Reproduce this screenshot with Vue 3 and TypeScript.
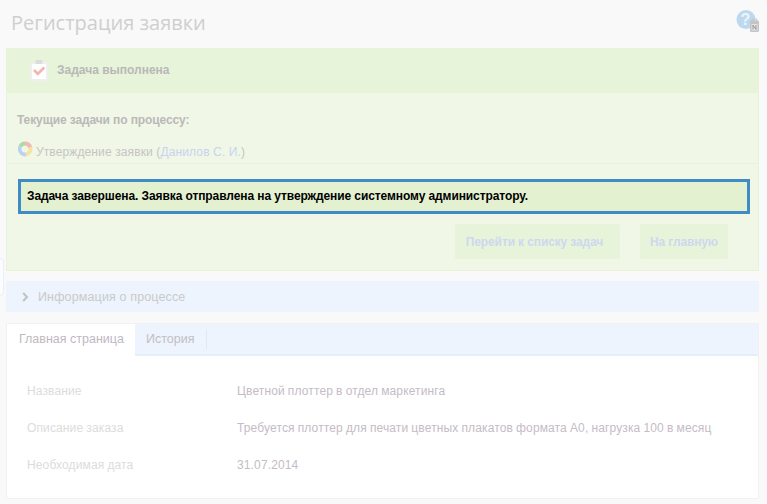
<script setup lang="ts">
const rows = [
  { label: 'Название', value: 'Цветной плоттер в отдел маркетинга' },
  { label: 'Описание заказа', value: 'Требуется плоттер для печати цветных плакатов формата А0, нагрузка 100 в месяц' },
  { label: 'Необходимая дата', value: '31.07.2014' },
]
</script>

<template>
  <div class="page">
    <span class="handle"></span>
    <header class="head">
      <h1>Регистрация заявки</h1>
      <span class="help">
        <svg width="24" height="24" viewBox="0 0 24 24">
          <circle cx="10" cy="9.5" r="9.5" fill="#bcd9ef" />
          <text x="9.5" y="15" text-anchor="middle" class="q">?</text>
          <rect x="14" y="10.5" width="9" height="11.5" rx="1.5" fill="#c4c4c4" />
          <rect x="16" y="9" width="5" height="3" rx="1" fill="none" stroke="#c4c4c4" />
          <rect x="15.5" y="14" width="6" height="6.5" fill="#e4e4e4" />
          <path d="M17 19.5v-4.5l3 4.500v-4.500" fill="none" stroke="#9a9a9a" />
        </svg>
      </span>
    </header>

    <section class="done">
      <div class="done-title">
        <svg class="clip" width="18" height="21" viewBox="0 0 18 21">
          <rect x="0" y="2" width="18" height="19" fill="#efefef" />
          <rect x="2" y="4" width="14" height="15" fill="#fff" />
          <rect x="5.500" y="0" width="7" height="4" rx="1" fill="#dcdcdc" />
          <path d="M4 10l3.800 4 6.500-6.500" fill="none" stroke="#f3b5b0" stroke-width="2.600" />
        </svg>
        <span>Задача выполнена</span>
      </div>
      <div class="done-body">
        <div class="current">Текущие задачи по процессу:</div>
        <div class="task">
          <svg class="ring" width="16" height="16" viewBox="0 0 16 16">
            <path d="M1.500 5A7 7 0 0 1 8 .5V4.500A3.500 3.500 0 0 0 4.800 6.500Z" fill="#a9dba9" />
            <path d="M8 .5A7.500 7.500 0 0 1 15.200 6L11.400 7A3.500 3.500 0 0 0 8 4.500Z" fill="#f3b9b0" />
            <path d="M15.200 6A7.500 7.500 0 0 1 9 15.400L8.600 11.500A3.500 3.500 0 0 0 11.400 7Z" fill="#f5e3a0" />
            <path d="M9 15.400A7.500 7.500 0 0 1 1.500 5L4.800 6.500A3.500 3.500 0 0 0 8.600 11.500Z" fill="#bcd0f0" />
          </svg>
          <span class="task-text">Утверждение заявки (<a>Данилов С. И.</a>)</span>
        </div>
        <div class="notice">Задача завершена. Заявка отправлена на утверждение системному администратору.</div>
        <div class="actions">
          <button class="wide">Перейти к списку задач</button>
          <button class="narrow">На главную</button>
        </div>
      </div>
    </section>

    <section class="info">
      <svg width="7" height="10" viewBox="0 0 7 10">
        <path d="M1.200 1l3.800 4-3.800 4" fill="none" stroke="#c2c2c2" stroke-width="2" />
      </svg>
      <span>Информация о процессе</span>
    </section>

    <section class="card">
      <nav class="tabs">
        <div class="tab active">Главная страница</div>
        <div class="tab other">История</div>
      </nav>
      <dl class="fields">
        <div v-for="row in rows" :key="row.label" class="field">
          <dt>{{ row.label }}</dt>
          <dd>{{ row.value }}</dd>
        </div>
      </dl>
    </section>
  </div>
</template>

<style>
html, body { margin: 0; background: #f9f9f9; }
</style>

<style scoped>
.page {
  position: relative;
  width: 767px;
  height: 504px;
  overflow: hidden;
  box-sizing: border-box;
  padding: 0 8px 0 6px;
  font-family: "Liberation Sans", Arial, sans-serif;
  font-size: 12px;
  background: #f9f9f9;
  color: #bdbdbd;
}
.handle {
  position: absolute;
  left: -6px;
  top: 258px;
  width: 10px;
  height: 38px;
  box-sizing: border-box;
  border: 1px solid #e9eff8;
  border-radius: 4px;
  background: #fbfcfe;
}
.head {
  height: 48px;
  display: flex;
  justify-content: space-between;
  align-items: flex-start;
}
h1 {
  margin: 11px 0 0 5px;
  font-family: "Open Sans", sans-serif;
  font-weight: 400;
  font-size: 20px;
  line-height: 24px;
  color: #cfcfcf;
}
.help { margin: 10px -1px 0 0; height: 24px; }
.q { font: bold 16px "Liberation Sans", sans-serif; fill: #eef5fa; }
.done {
  height: 223px;
  box-sizing: border-box;
  background: #f0f7e6;
  border: 1px solid #e7f2da;
  border-top: 0;
}
.done-title {
  height: 45px;
  box-sizing: border-box;
  padding: 0 0 2px 24px;
  background: #e7f4d9;
  margin: 0 -1px;
  display: flex;
  align-items: center;
  font-weight: 700;
  color: #b8b8b8;
}
.clip { margin-right: 9px; margin-top: 2px; }
.current {
  margin: 20px 0 0 10px;
  line-height: 14px;
  font-weight: 700;
  letter-spacing: -0.11px;
  color: #b9b9b9;
}
.task {
  margin-top: 14px;
  height: 23px;
  box-sizing: border-box;
  padding-left: 10px;
  display: flex;
  gap: 3px;
  border-bottom: 1px solid #e7f2da;
  color: #c5c5c5;
}
.task-text { line-height: 14px; margin-top: 4px; letter-spacing: 0.12px; }
.task a { color: #c8d3f0; }
.notice {
  margin: 15px 8px 0 11px;
  height: 35px;
  box-sizing: border-box;
  border: 3px solid #3f8bc6;
  background: #e4f1d1;
  color: #000;
  font-weight: 700;
  letter-spacing: -0.09px;
  padding-left: 6px;
  line-height: 29px;
}
.actions {
  display: flex;
  gap: 20px;
  justify-content: flex-end;
  padding-right: 30px;
  margin-top: 10px;
}
button {
  height: 35px;
  border: 0;
  border-radius: 2px;
  background: #e7f4d9;
  color: #cdd8f0;
  font: 700 12px "Liberation Sans", Arial, sans-serif;
  letter-spacing: -0.12px;
  padding: 0;
}
.wide { width: 165px; padding-right: 6px; }
.narrow { width: 88px; }
.info {
  margin-top: 10px;
  height: 31px;
  display: flex;
  align-items: center;
  gap: 9px;
  padding-left: 16px;
  background: #edf4fd;
  font-size: 12.5px;
  letter-spacing: 0.14px;
  color: #cacaca;
}
.card {
  margin-top: 11px;
  height: 176px;
  box-sizing: border-box;
  background: #fff;
  border: 1px solid #f1f1f1;
  border-radius: 2px;
}
.tabs {
  height: 32px;
  box-sizing: border-box;
  display: flex;
  background: #edf4fd;
  border-bottom: 2px solid #e6eef8;
  align-items: flex-start;
  font-size: 12.5px;
}
.active {
  width: 128px;
  height: 32px;
  line-height: 31px;
  box-sizing: border-box;
  padding-left: 12px;
  background: #fff;
  color: #c0b8bf;
}
.other {
  margin-top: 5px;
  height: 20px;
  line-height: 20px;
  padding: 0 12px 0 11px;
  border-right: 1px solid #e1e8f2;
  color: #c2bec6;
}
.fields { margin: 0; padding: 28px 0 0 20px; }
.field {
  display: flex;
  height: 37px;
  line-height: 14px;
  letter-spacing: 0.13px;
  word-spacing: -0.4px;
}
dt { width: 210px; color: #dcdcdc; }
dd { margin: 0; color: #c4bcc6; }
</style>
